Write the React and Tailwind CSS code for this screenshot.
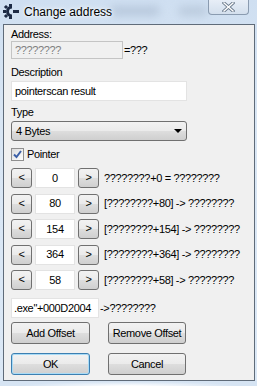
import React from 'react';

const btn =
  'flex items-center justify-center rounded-[3px] border border-[#707070] bg-[linear-gradient(to_bottom,#f2f2f2_0%,#ebebeb_48%,#dddddd_52%,#cfcfcf_100%)] text-black';

const ArrowButton = ({ dir }) => (
  <div className={`${btn} w-[21px] h-[20px] text-[11px] leading-none pb-[1px]`}>{dir}</div>
);

const OffsetRow = ({ value, text }) => (
  <div className="flex items-center h-[20px]">
    <ArrowButton dir="<" />
    <div className="ml-[3px] w-[40px] h-[20px] bg-white border border-[#e3e3e3] flex items-center justify-center">
      {value}
    </div>
    <div className="ml-[3px]">
      <ArrowButton dir=">" />
    </div>
    <span className="ml-[5px] whitespace-nowrap">{text}</span>
  </div>
);

// cheat engine style gear
const CeIcon = () => (
  <svg width="17" height="15" viewBox="0 0 17 15">
    <path
      d="M9 1.5 A6 6 0 1 0 9 13.5 L9 10.5 A3 3 0 1 1 9 4.5 Z"
      fill="#1d2a44"
    />
    <g fill="#1d2a44">
      <rect x="0" y="6" width="3" height="3" />
      <rect x="1.5" y="1.5" width="3" height="3" transform="rotate(45 3 3)" />
      <rect x="1.5" y="10.5" width="3" height="3" transform="rotate(45 3 12)" />
      <rect x="6" y="0" width="3" height="2.5" />
      <rect x="6" y="12.5" width="3" height="2.5" />
    </g>
    <rect x="10" y="6" width="6" height="3" fill="#1d2a44" />
  </svg>
);

export default function App() {
  return (
    <div
      className="w-[257px] h-[386px] overflow-hidden flex flex-col bg-[linear-gradient(to_bottom,#cfdff1,#d9e6f4_30%,#dbe8f6)] text-[11px] tracking-[-0.35px] text-black"
      style={{ fontFamily: '"Liberation Sans", Arial, sans-serif' }}
    >
      {/* title bar */}
      <div className="relative h-[24px] flex items-start shrink-0">
        <div className="absolute left-[110px] top-[6px] w-[50px] h-[10px] rounded-full bg-[#aebfd4] blur-[4px] opacity-70" />
        <div className="absolute left-[178px] top-[6px] w-[30px] h-[10px] rounded-full bg-[#b3c3d6] blur-[4px] opacity-70" />
        <div className="relative ml-[3px] mt-[4px]">
          <CeIcon />
        </div>
        <span className="relative ml-[4px] mt-[3px] text-[12px] tracking-normal [text-shadow:0_0_6px_#fff,0_0_3px_#fff]">
          Change address
        </span>
        <div className="absolute left-[208px] top-0 w-[41px] h-[15px] rounded-b-[4px] border border-t-0 border-[#8a9bb0] bg-[linear-gradient(to_bottom,#e7eef7,#d3dfed)] flex items-center justify-center">
          <svg width="13" height="10" viewBox="0 0 13 10">
            <path d="M2 1 L11 9 M11 1 L2 9" stroke="#6b7a8c" strokeWidth="3.2" strokeLinecap="square" />
            <path d="M2 1 L11 9 M11 1 L2 9" stroke="#ffffff" strokeWidth="1.4" strokeLinecap="square" />
          </svg>
        </div>
      </div>

      {/* client area */}
      <div className="ml-[3px] w-[252px] h-[357px] border border-[#5f6b79] bg-[#f0f0f0] pl-[7px] pt-[2px] flex flex-col">
        <span className="h-[14px] leading-[14px]">Address:</span>
        <div className="flex items-center h-[18px]">
          <div className="w-[112px] h-[18px] border border-[#c4c4c4] bg-[#f0f0f0] text-[#808080] px-[3px] flex items-center">
            ????????
          </div>
          <span className="ml-[1px]">=???</span>
        </div>

        <span className="mt-[6px] h-[14px] leading-[14px]">Description</span>
        <div className="mt-[2px] w-[176px] h-[20px] bg-white border border-[#e3e3e3] px-[3px] flex items-center">
          pointerscan result
        </div>

        <span className="mt-[4px] h-[14px] leading-[14px]">Type</span>
        <div className={`${btn} mt-[2px] w-[176px] h-[20px] !justify-between px-[4px]`}>
          <span>4 Bytes</span>
          <svg width="8" height="4" viewBox="0 0 8 4">
            <path d="M0 0 L8 0 L4 4 Z" fill="#000" />
          </svg>
        </div>

        <div className="mt-[6px] flex items-center h-[14px]">
          <div className="w-[13px] h-[13px] border border-[#8f8f8f] bg-[linear-gradient(to_bottom_right,#dcdcdc,#ffffff)] flex items-center justify-center">
            <svg width="9" height="9" viewBox="0 0 9 9">
              <path d="M1 4.5 L3.5 7 L8 1" fill="none" stroke="#3b5fa7" strokeWidth="2" />
            </svg>
          </div>
          <span className="ml-[3px]">Pointer</span>
        </div>

        <div className="mt-[7px] flex flex-col gap-[5.5px]">
          <OffsetRow value="0" text="????????+0 = ????????" />
          <OffsetRow value="80" text="[????????+80] -> ????????" />
          <OffsetRow value="154" text="[????????+154] -> ????????" />
          <OffsetRow value="364" text="[????????+364] -> ????????" />
          <OffsetRow value="58" text="[????????+58] -> ????????" />
        </div>

        <div className="mt-[8px] flex items-center h-[20px]">
          <div className="w-[88px] h-[20px] bg-white border border-[#e3e3e3] px-[2px] flex items-center whitespace-nowrap overflow-hidden">
            .exe"+000D2004
          </div>
          <span className="ml-[1px]">-&gt;????????</span>
        </div>

        <div className="mt-[4px] flex gap-[18px]">
          <div className={`${btn} w-[79px] h-[22px]`}>Add Offset</div>
          <div className={`${btn} w-[78px] h-[22px]`}>Remove Offset</div>
        </div>

        <div className="mt-[9px] flex gap-[18px]">
          <div className={`${btn} w-[79px] h-[22px] !border-[#3c7fb1] shadow-[inset_0_0_0_1px_#a9dbf6]`}>OK</div>
          <div className={`${btn} w-[78px] h-[22px]`}>Cancel</div>
        </div>
      </div>

      <div className="flex-1 bg-[radial-gradient(ellipse_at_50%_100%,#ffffff,#d6e4f3_60%)]" />
    </div>
  );
}
